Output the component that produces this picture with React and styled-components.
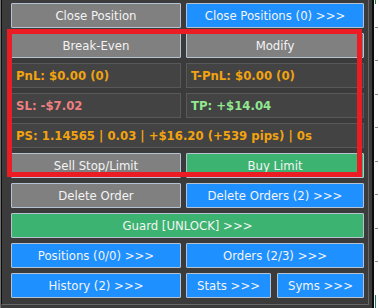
import styled, { createGlobalStyle } from "styled-components";

const GlobalStyle = createGlobalStyle`
  html, body {
    margin: 0;
    padding: 0;
    background: #ffffff;
  }
  body {
    font-family: "DejaVu Sans Condensed", "DejaVu Sans", sans-serif;
  }
`;

const Screen = styled.div`
  display: flex;
  width: 379px;
  height: 308px;
  overflow: hidden;
`;

const Frame = styled.div`
  box-sizing: border-box;
  flex: none;
  width: 374px;
  height: 308px;
  background: #3b3b3b;
  border-left: 1px solid #6e6e6e;
  border-right: 2px solid #0d0d0d;
  padding: 0 3px 3px 0;
`;

const Panel = styled.div`
  position: relative;
  box-sizing: border-box;
  height: 100%;
  border-left: 1px solid #0d0d0d;
  border-right: 1px solid #666666;
  border-bottom: 1px solid #666666;
  padding: 3px 3px 0 9px;
  display: grid;
  grid-template-columns: 170px 178px;
  grid-auto-rows: 25px;
  gap: 5px;
`;

const tones = {
  gray: "#808080",
  blue: "#1e90ff",
  green: "#3cb371",
};

const Button = styled.button`
  box-sizing: border-box;
  margin: 0;
  padding: 0;
  height: 25px;
  min-width: 0;
  grid-column: ${(p) => (p.$wide ? "1 / span 2" : "auto")};
  background: ${(p) => tones[p.$tone || "gray"]};
  border: 1px solid #b4c2d2;
  border-radius: 1px;
  color: #f4f4f4;
  font-family: inherit;
  font-size: 13px;
  line-height: 23px;
  text-align: center;
  white-space: nowrap;
`;

const Cell = styled.div`
  box-sizing: border-box;
  grid-column: ${(p) => (p.$wide ? "1 / span 2" : "auto")};
  display: flex;
  align-items: center;
  padding-left: 4px;
  background: #434343;
  border: 1px solid #595959;
  color: ${(p) => p.$color};
  font-size: 13px;
  font-weight: bold;
  white-space: nowrap;
  overflow: hidden;
`;

const Split = styled.div`
  display: grid;
  grid-template-columns: 85px 87px;
  gap: 6px;
`;

const Highlight = styled.div`
  position: absolute;
  box-sizing: border-box;
  left: 5px;
  top: 29px;
  width: 355px;
  height: 148px;
  border: 5px solid #ec1c24;
  pointer-events: none;
`;

const ChartEdge = styled.svg`
  flex: none;
  width: 5px;
  height: 308px;
  background: #ffffff;
`;

const ORANGE = "#f2a30f";

const ticks = [27, 60, 94, 127, 161, 194, 228, 261];

const App = () => {
  return (
    <Screen>
      <GlobalStyle />
      <Frame>
        <Panel>
          <Button>Close Position</Button>
          <Button $tone="blue">Close Positions (0) &gt;&gt;&gt;</Button>

          <Button>Break-Even</Button>
          <Button>Modify</Button>

          <Cell $color={ORANGE}>PnL: $0.00 (0)</Cell>
          <Cell $color={ORANGE}>T-PnL: $0.00 (0)</Cell>

          <Cell $color="#f08080">SL: -$7.02</Cell>
          <Cell $color="#90e890">TP: +$14.04</Cell>

          <Cell $wide $color={ORANGE}>
            PS: 1.14565 | 0.03 | +$16.20 (+539 pips) | 0s
          </Cell>

          <Button>Sell Stop/Limit</Button>
          <Button $tone="green">Buy Limit</Button>

          <Button>Delete Order</Button>
          <Button $tone="blue">Delete Orders (2) &gt;&gt;&gt;</Button>

          <Button $wide $tone="green">
            Guard [UNLOCK] &gt;&gt;&gt;
          </Button>

          <Button $tone="blue">Positions (0/0) &gt;&gt;&gt;</Button>
          <Button $tone="blue">Orders (2/3) &gt;&gt;&gt;</Button>

          <Button $tone="blue">History (2) &gt;&gt;&gt;</Button>
          <Split>
            <Button $tone="blue">Stats &gt;&gt;&gt;</Button>
            <Button $tone="blue">Syms &gt;&gt;&gt;</Button>
          </Split>

          <Highlight />
        </Panel>
      </Frame>
      <ChartEdge viewBox="0 0 5 308">
        <line x1="1.5" y1="0" x2="1.5" y2="4" stroke="#1f8a3a" strokeWidth="1" />
        {ticks.map((y) => (
          <line key={y} x1="1" y1={y + 0.5} x2="4" y2={y + 0.5} stroke="#9a9a9a" strokeWidth="1" />
        ))}
        <line x1="1.5" y1="295" x2="1.5" y2="308" stroke="#2a7a70" strokeWidth="1" />
      </ChartEdge>
    </Screen>
  );
};

export default App;
